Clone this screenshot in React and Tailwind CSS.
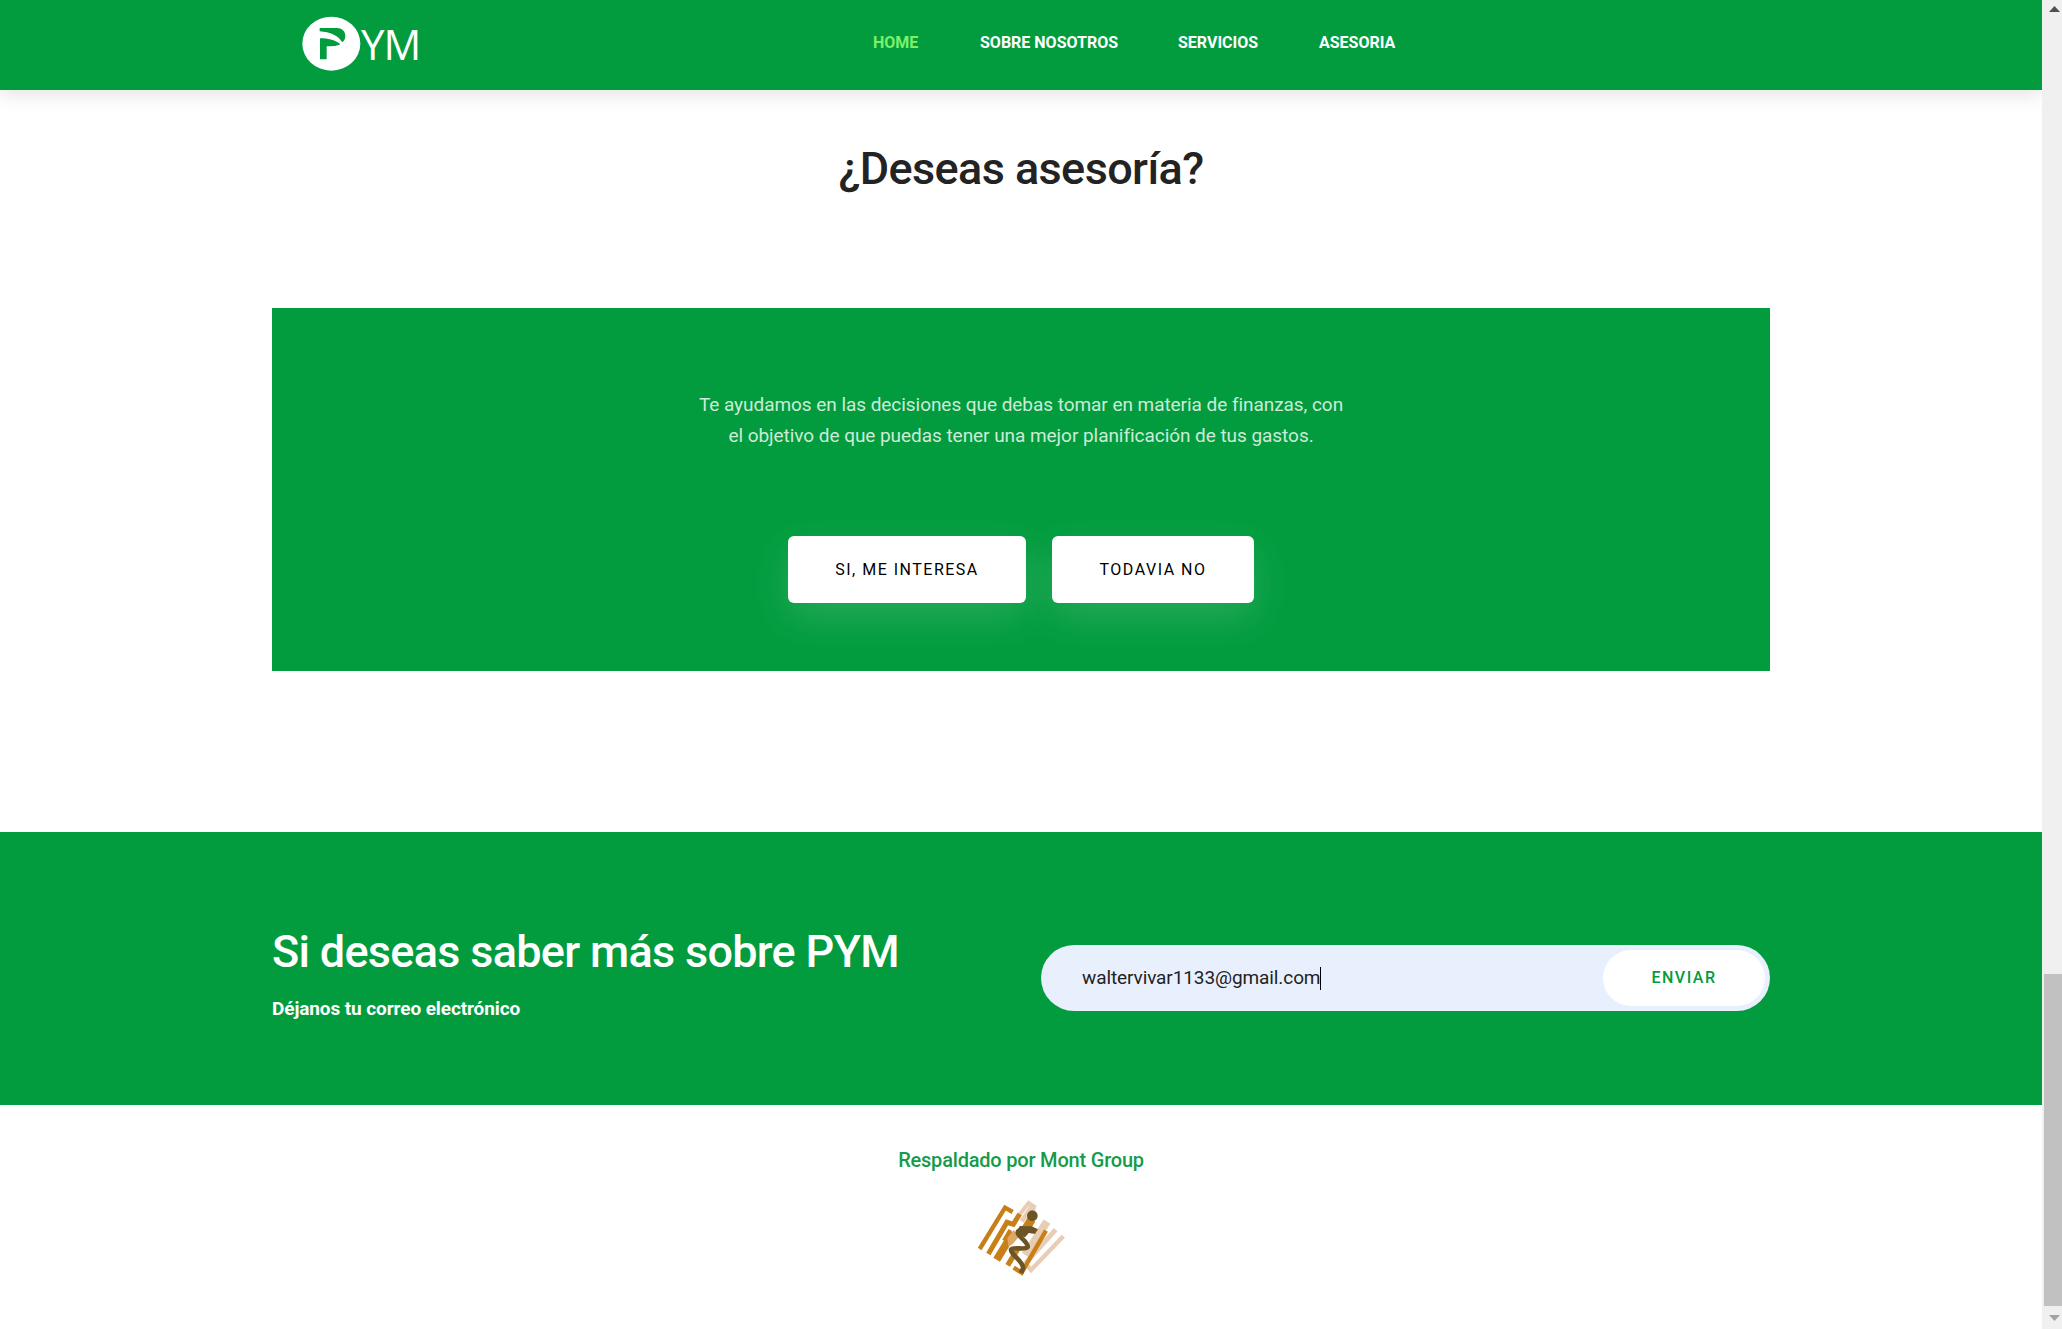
import React from "react";

const navItems = [
  { label: "HOME", cls: "w-[46px] mr-[61px] text-[#7df06a]" },
  { label: "SOBRE NOSOTROS", cls: "w-[139px] mr-[59px] text-white" },
  { label: "SERVICIOS", cls: "w-[80px] mr-[61px] text-white" },
  { label: "ASESORIA", cls: "w-[77px] text-white" },
];

function Logo() {
  return (
    <a className="flex h-[90px] w-[160px] items-start">
      <svg className="mt-4 h-[56px] w-[59px] shrink-0" viewBox="64 48 177 168">
        <ellipse cx="152" cy="131" rx="87" ry="81" fill="#fff" />
        <path d="M117 84H168C184 84 194 94 194 107C194 115 191 122 185 127C173 107 148 96 117 94Z" fill="#029c3e" />
        <path d="M118 115C142 115 161 120 179 132C170 138 160 139 138 139V178H118Z" fill="#029c3e" />
      </svg>
      <span className="mt-[14px] h-[60px] text-[42px] leading-[60px] font-normal tracking-[-1px] text-white font-['Open_Sans',sans-serif]">
        YM
      </span>
    </a>
  );
}

function MontLogo() {
  return (
    <svg className="h-[79px] w-[90px]" viewBox="50 175 270 237">
      <g fill="none" stroke="#e8cdb5">
        <path d="M163 240L205 187L226 201" strokeWidth="12" />
        <path d="M184 242L212 201L226 203" strokeWidth="14" />
        <path d="M195 343L260 243" strokeWidth="24" />
        <path d="M195 368L286 267" strokeWidth="15" />
        <path d="M200 374L212 388L309 287" strokeWidth="13" />
      </g>
      <g fill="none" stroke="#c87f17">
        <path d="M58 325L134 201L157 214" strokeWidth="13" />
        <path d="M84 340L140 245L159 251L178 220" strokeWidth="15" />
        <path d="M109 357L158 277" strokeWidth="23" />
        <path d="M131 300L150 268" strokeWidth="12" />
        <path d="M190 275L214 236" strokeWidth="26" />
        <path d="M142 374L172 325" strokeWidth="16" />
        <path d="M160 381L184 396L257 270" strokeWidth="13" />
      </g>
      <path d="M141 292L160 268L176 288L158 309L144 318Z" fill="#dfa862" />
      <circle cx="216" cy="225" r="16" fill="#6b5525" />
      <path
        d="M225 271C202 271 176 262 172 275C170 286 204 303 202 319C192 330 160 316 152 327C151 343 191 362 188 383L182 397"
        fill="none"
        stroke="#6b5525"
        strokeWidth="14"
        strokeLinejoin="round"
      />
      <path d="M178 256L214 257L233 266L224 279L205 277L194 290L168 278Z" fill="#6b5525" />
    </svg>
  );
}

function Scrollbar() {
  return (
    <div className="flex h-[1329px] w-5 shrink-0 flex-col items-end bg-[#f0f0f0]">
      <svg className="mr-[2px] mt-[5px] h-[7px] w-[11px]" viewBox="0 0 11 7">
        <path d="M0 7L5.5 1L11 7Z" fill="#505050" />
      </svg>
      <div className="mt-[962px] h-[332px] w-[18px] bg-[#c1c1c1]" />
      <svg className="mr-[2px] mt-[9px] h-[6px] w-[11px]" viewBox="0 0 11 6">
        <path d="M0 0H11L5.5 6Z" fill="#a3a3a3" />
      </svg>
    </div>
  );
}

export default function App() {
  return (
    <div className="flex h-[1329px] w-[2062px] overflow-hidden bg-white font-[Roboto,sans-serif]">
      <div className="flex w-[2042px] flex-col overflow-hidden">
        <header className="flex h-[90px] shrink-0 bg-[#029c3e] pl-[302px] shadow-[0_4px_20px_rgba(0,0,0,0.12)]">
          <Logo />
          <nav className="ml-[411px] mt-[31px] flex h-6 text-base leading-6 font-bold whitespace-nowrap">
            {navItems.map((n) => (
              <a key={n.label} className={n.cls}>{n.label}</a>
            ))}
          </nav>
        </header>

        <h2 className="mt-[49px] h-[60px] text-center text-[45px] leading-[60px] font-medium tracking-[-0.6px] text-[#232323]">
          ¿Deseas asesoría?
        </h2>

        <section className="mx-auto mt-[109px] flex h-[363px] w-[1498px] shrink-0 flex-col items-center bg-[#029c3e]">
          <p className="mt-[81px] text-center text-[19px] leading-[31px] tracking-[-0.05px] whitespace-nowrap text-[#cdebd8]">
            Te ayudamos en las decisiones que debas tomar en materia de finanzas, con
            <br />
            el objetivo de que puedas tener una mejor planificación de tus gastos.
          </p>
          <div className="mt-[85px] flex gap-[26px] text-base tracking-[1.5px] text-black">
            <button className="h-[67px] w-[238px] rounded-md bg-white shadow-[0_14px_40px_rgba(255,255,255,0.15)]">
              SI, ME INTERESA
            </button>
            <button className="h-[67px] w-[202px] rounded-md bg-white shadow-[0_14px_40px_rgba(255,255,255,0.15)]">
              TODAVIA NO
            </button>
          </div>
        </section>

        <section className="mt-[161px] flex h-[273px] shrink-0 bg-[#029c3e] pl-[272px] text-white">
          <div className="w-[769px]">
            <h2 className="mt-[90px] h-[60px] text-[45px] leading-[60px] font-medium tracking-[-0.7px] whitespace-nowrap">
              Si deseas saber más sobre PYM
            </h2>
            <p className="mt-[12px] text-[19px] leading-[30px] font-bold tracking-[-0.1px]">Déjanos tu correo electrónico</p>
          </div>
          <form className="mt-[113px] flex h-[66px] w-[729px] items-center rounded-full bg-[#e8f0fe] pr-[5px] pl-[41px]">
            <span className="text-[19px] leading-6 tracking-[-0.1px] text-[#222]">waltervivar1133@gmail.com</span>
            <span className="h-[23px] w-px bg-black" />
            <button className="ml-auto h-[56px] w-[162px] rounded-full bg-white text-base font-medium tracking-[1.5px] text-[#029c3e]">
              ENVIAR
            </button>
          </form>
        </section>

        <footer className="flex flex-col items-center">
          <p className="mt-[40px] h-[30px] text-xl leading-[30px] font-medium tracking-[-0.2px] text-[#169b48]">
            Respaldado por Mont Group
          </p>
          <div className="mt-[24px] ml-[2px]">
            <MontLogo />
          </div>
        </footer>
      </div>
      <Scrollbar />
    </div>
  );
}
